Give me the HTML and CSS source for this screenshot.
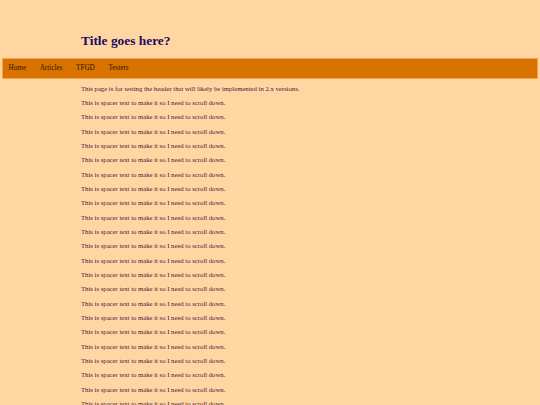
FILE: index.html
```html
<!DOCTYPE html>
<html>
<head>
<meta charset="utf-8">
<link rel="stylesheet" href="styles.css">
</head>
<body>
<header class="header">
  <h1 class="title">Title goes here?</h1>
  <nav class="nav">
    <a class="nav-link" href="#">Home</a>
    <a class="nav-link" href="#">Articles</a>
    <a class="nav-link" href="#">TFGD</a>
    <a class="nav-link" href="#">Testers</a>
  </nav>
</header>
<main class="content">
  <p class="line">This page is for testing the header that will likely be implemented in 2.x versions.</p>
  <p class="line">This is spacer text to make it so I need to scroll down.</p>
  <p class="line">This is spacer text to make it so I need to scroll down.</p>
  <p class="line">This is spacer text to make it so I need to scroll down.</p>
  <p class="line">This is spacer text to make it so I need to scroll down.</p>
  <p class="line">This is spacer text to make it so I need to scroll down.</p>
  <p class="line">This is spacer text to make it so I need to scroll down.</p>
  <p class="line">This is spacer text to make it so I need to scroll down.</p>
  <p class="line">This is spacer text to make it so I need to scroll down.</p>
  <p class="line">This is spacer text to make it so I need to scroll down.</p>
  <p class="line">This is spacer text to make it so I need to scroll down.</p>
  <p class="line">This is spacer text to make it so I need to scroll down.</p>
  <p class="line">This is spacer text to make it so I need to scroll down.</p>
  <p class="line">This is spacer text to make it so I need to scroll down.</p>
  <p class="line">This is spacer text to make it so I need to scroll down.</p>
  <p class="line">This is spacer text to make it so I need to scroll down.</p>
  <p class="line">This is spacer text to make it so I need to scroll down.</p>
  <p class="line">This is spacer text to make it so I need to scroll down.</p>
  <p class="line">This is spacer text to make it so I need to scroll down.</p>
  <p class="line">This is spacer text to make it so I need to scroll down.</p>
  <p class="line">This is spacer text to make it so I need to scroll down.</p>
  <p class="line">This is spacer text to make it so I need to scroll down.</p>
  <p class="line">This is spacer text to make it so I need to scroll down.</p>
  <p class="line">This is spacer text to make it so I need to scroll down.</p>
  <p class="line">This is spacer text to make it so I need to scroll down.</p>
</main>
</body>
</html>
```
FILE: styles.css
```css
html, body {
  margin: 0;
  padding: 0;
  background: #ffd6a1;
  font-family: "Liberation Serif", "Times New Roman", serif;
}
body {
  padding: 0 2px;
}
.header {
  padding-top: 33px;
}
.title {
  margin: 0 0 9px 79px;
  font-size: 13.4px;
  line-height: 16px;
  font-weight: bold;
  color: #1c0b5e;
}
.nav {
  display: flex;
  align-items: center;
  height: 18.6px;
  background: #d97300;
  border: 1px solid #f5a44a;
  padding-left: 5.5px;
  gap: 13.6px;
}
.nav-link {
  font-size: 7.2px;
  color: #2e1200;
  text-decoration: none;
}
.content {
  margin-left: 79px;
  margin-top: -0.6px;
}
.line {
  margin: 6.6px 0;
  font-size: 6.7px;
  line-height: 7.75px;
  color: #4a1640;
}
```
